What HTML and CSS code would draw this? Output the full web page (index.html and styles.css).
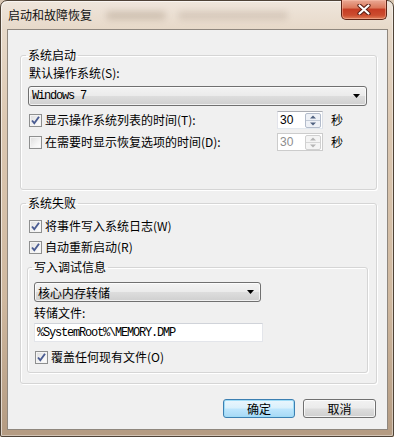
FILE: index.html
```html
<!DOCTYPE html>
<html lang="zh-CN">
<head>
<meta charset="utf-8">
<title>启动和故障恢复</title>
<link rel="stylesheet" href="styles.css">
</head>
<body>
<div class="window">
  <div class="titlebar">
    <span class="title">启动和故障恢复</span>
    <span class="glass"><span class="smudge s1"></span><span class="smudge s2"></span></span>
    <button class="close" aria-label="关闭">
      <svg width="14" height="11" viewBox="0 0 14 11">
        <path d="M2.5 1.5 L11.5 9.5 M11.5 1.5 L2.5 9.5" stroke="#5b1d12" stroke-width="4.2" stroke-linecap="round" fill="none"/>
        <path d="M2.5 1.5 L11.5 9.5 M11.5 1.5 L2.5 9.5" stroke="#ffffff" stroke-width="2.2" stroke-linecap="round" fill="none"/>
      </svg>
    </button>
  </div>
  <div class="client">
    <fieldset class="group g1">
      <legend>系统启动</legend>
      <div class="label">默认操作系统(S):</div>
      <div class="combo combo-wide">
        <span class="mono">Windows 7</span>
        <svg class="arrow" width="7" height="4" viewBox="0 0 7 4"><path d="M0 0 H7 L3.5 4 Z" fill="#000"/></svg>
      </div>
      <div class="timerow">
        <label class="check"><span class="box"><svg width="11" height="11" viewBox="0 0 11 11"><path d="M2 5.5 L4.3 8.2 L9 1.8" stroke="#4a5c92" stroke-width="1.9" fill="none"/></svg></span>显示操作系统列表的时间(T):</label>
        <div class="spin">
          <span class="num">30</span>
          <svg class="spinbtn" width="16" height="15" viewBox="0 0 16 15">
            <rect x="0.5" y="0.5" width="15" height="14" rx="1.5" fill="#eef1f6" stroke="#b3bccb"/>
            <line x1="1" y1="7.5" x2="15" y2="7.5" stroke="#c2cad6"/>
            <path d="M5 5.5 H11 L8 2.5 Z" fill="#4f6180"/>
            <path d="M5 9.5 H11 L8 12.5 Z" fill="#4f6180"/>
          </svg>
        </div>
        <span class="unit">秒</span>
      </div>
      <div class="timerow row2">
        <label class="check"><span class="box"></span>在需要时显示恢复选项的时间(D):</label>
        <div class="spin disabled">
          <span class="num">30</span>
          <svg class="spinbtn" width="16" height="15" viewBox="0 0 16 15">
            <rect x="0.5" y="0.5" width="15" height="14" rx="1.5" fill="#f4f4f4" stroke="#d0d0d0"/>
            <line x1="1" y1="7.5" x2="15" y2="7.5" stroke="#d6d6d6"/>
            <path d="M5 5.5 H11 L8 2.5 Z" fill="#b4b4b4"/>
            <path d="M5 9.5 H11 L8 12.5 Z" fill="#b4b4b4"/>
          </svg>
        </div>
        <span class="unit">秒</span>
      </div>
    </fieldset>

    <fieldset class="group g2">
      <legend>系统失败</legend>
      <label class="check row"><span class="box"><svg width="11" height="11" viewBox="0 0 11 11"><path d="M2 5.5 L4.3 8.2 L9 1.8" stroke="#4a5c92" stroke-width="1.9" fill="none"/></svg></span>将事件写入系统日志(W)</label>
      <label class="check row row-b"><span class="box"><svg width="11" height="11" viewBox="0 0 11 11"><path d="M2 5.5 L4.3 8.2 L9 1.8" stroke="#4a5c92" stroke-width="1.9" fill="none"/></svg></span>自动重新启动(R)</label>

      <fieldset class="group g3">
        <legend>写入调试信息</legend>
        <div class="combo combo-dump">
          <span>核心内存转储</span>
          <svg class="arrow" width="7" height="4" viewBox="0 0 7 4"><path d="M0 0 H7 L3.5 4 Z" fill="#000"/></svg>
        </div>
        <div class="label dumplabel">转储文件:</div>
        <div class="textbox"><span class="mono">%SystemRoot%\MEMORY.DMP</span></div>
        <label class="check row row-c"><span class="box"><svg width="11" height="11" viewBox="0 0 11 11"><path d="M2 5.5 L4.3 8.2 L9 1.8" stroke="#4a5c92" stroke-width="1.9" fill="none"/></svg></span>覆盖任何现有文件(O)</label>
      </fieldset>
    </fieldset>

    <div class="buttons">
      <button class="btn default">确定</button>
      <button class="btn">取消</button>
    </div>
  </div>
</div>
</body>
</html>
```

FILE: styles.css
```css
html, body {
  margin: 0;
  padding: 0;
  background: #d9c7b3;
}
body {
  font-family: "Noto Sans CJK SC", "Noto Sans", sans-serif;
  font-size: 12px;
  color: #000;
}
.window {
  width: 394px;
  height: 437px;
  box-sizing: border-box;
  border: 1px solid #4f4337;
  border-radius: 7px 7px 2px 2px;
  padding: 0 5px 6px 6px;
  background: linear-gradient(180deg, #efe6dc 0px, #e7d9c9 28px, #dcc8b2 120px, #cfb89f 300px, #b59c83 430px);
  display: flex;
  flex-direction: column;
  box-shadow: inset 1px 1px 0 rgba(255,255,255,0.6), inset -1px -1px 0 rgba(255,255,255,0.4);
}
.titlebar {
  height: 28px;
  display: flex;
  align-items: center;
}
.title {
  padding-left: 1px;
  font-size: 12px;
  line-height: 16px;
  color: #111;
  flex: none;
}
.glass {
  flex: 1;
  height: 16px;
  display: flex;
  align-items: center;
  gap: 12px;
  padding-left: 14px;
}
.smudge {
  height: 9px;
  border-radius: 5px;
  background: rgba(120, 95, 75, 0.22);
  filter: blur(3px);
}
.s1 { width: 60px; }
.s2 { width: 110px; background: rgba(120, 95, 75, 0.16); }
.close {
  flex: none;
  align-self: flex-start;
  margin-top: -1px;
  margin-right: 1px;
  width: 46px;
  height: 20px;
  padding: 0;
  border: 1px solid #5e2416;
  border-top: none;
  border-radius: 0 0 5px 5px;
  background: linear-gradient(180deg, #eaa995 0%, #dc7a5d 40%, #c63d24 50%, #cc4c2f 80%, #e0805a 100%);
  box-shadow: inset 0 0 0 1px rgba(255,200,180,0.45);
  display: flex;
  align-items: center;
  justify-content: center;
}
.client {
  height: 401px;
  box-sizing: border-box;
  border: 1px solid #8f877e;
  background: #f0f0f0;
  display: flex;
  flex-direction: column;
}
.group {
  margin: 0;
  border: 1px solid #d5d5d5;
  border-radius: 3px;
  box-shadow: inset 1px 1px 0 #ffffff, 1px 1px 0 #ffffff;
  min-width: 0;
}
.group legend {
  padding: 0 2px;
  line-height: 16px;
  height: 16px;
}
.g1 {
  margin: 17px 10px 0 12px;
  padding: 2px 9px 38px 7px;
}
.g1 > legend { margin-left: -2px; }
.g2 {
  margin: 5px 10px 0 12px;
  padding: 7px 8px 10px 6px;
}
.g2 > legend { margin-left: -1px; }
.g3 {
  margin: 4px 0 0 0;
  padding: 7px 6px 7px 6px;
}
.g3 > legend { margin-left: -2px; }

.label {
  height: 16px;
  line-height: 16px;
  padding-left: 1px;
}
.mono {
  font-family: "Liberation Mono", "DejaVu Sans Mono", monospace;
  font-size: 12px;
  letter-spacing: -1.2px;
}
.combo {
  height: 20px;
  box-sizing: border-box;
  border: 1px solid #707070;
  border-radius: 3px;
  background: linear-gradient(180deg, #f3f3f3 0%, #ebebeb 48%, #dddddd 52%, #cfcfcf 100%);
  box-shadow: inset 0 0 0 1px rgba(255,255,255,0.7);
  display: flex;
  align-items: center;
  justify-content: space-between;
  padding: 0 6px 0 3px;
  margin-top: 5px;
}
.combo-dump {
  width: 227px;
  margin-top: 0;
}
.arrow { flex: none; }

.timerow {
  display: grid;
  grid-template-columns: 249px 46px auto;
  align-items: center;
  height: 18px;
  margin-top: 5px;
}
.timerow.row2 { margin-top: 4px; }
.check {
  display: flex;
  align-items: center;
  height: 16px;
  line-height: 16px;
  padding-left: 1px;
  white-space: nowrap;
}
.box {
  width: 13px;
  height: 13px;
  box-sizing: border-box;
  border: 1px solid #8e8f8f;
  background: linear-gradient(135deg, #dcdcdc 0%, #f4f4f4 60%, #ffffff 100%);
  box-shadow: inset 0 0 0 1px #f4f4f4;
  margin-right: 3px;
  display: flex;
  align-items: center;
  justify-content: center;
  flex: none;
}
.row { padding-left: 2px; }
.row-b { margin-top: 5px; }
.row-c { margin-top: 7px; padding-left: 1px; }

.spin {
  width: 46px;
  height: 18px;
  box-sizing: border-box;
  border: 1px solid #abadb3;
  border-left-color: #e2e3ea;
  border-right-color: #dbdfe6;
  border-bottom-color: #e3e9ef;
  background: #fff;
  display: flex;
  align-items: center;
  justify-content: space-between;
  padding: 0 0 0 2px;
}
.spin .num {
  font-family: "Liberation Sans", Arial, sans-serif;
  font-size: 12px;
  line-height: 16px;
}
.spin .spinbtn { margin-right: 1px; }
.spin.disabled {
  border-color: #cccccc;
  background: #fff;
}
.spin.disabled .num { color: #8d8d8d; }
.unit {
  margin-left: 8px;
  line-height: 16px;
}

.dumplabel { margin-top: 3px; padding-left: 0; }
.textbox {
  width: 229px;
  height: 19px;
  box-sizing: border-box;
  margin-top: 2px;
  border: 1px solid #e3e5ea;
  border-top-color: #d0d3d9;
  background: #fff;
  display: flex;
  align-items: center;
  padding-left: 2px;
}

.buttons {
  display: flex;
  justify-content: flex-end;
  gap: 8px;
  margin-top: 15px;
  padding-right: 11px;
}
.btn {
  width: 73px;
  height: 19px;
  padding: 0;
  box-sizing: border-box;
  font-family: "Noto Sans CJK SC", sans-serif;
  font-size: 12px;
  line-height: 16px;
  color: #000;
  border: 1px solid #707070;
  border-radius: 3px;
  background: linear-gradient(180deg, #f2f2f2 0%, #ebebeb 48%, #dddddd 52%, #cfcfcf 100%);
  box-shadow: inset 0 0 0 1px rgba(255,255,255,0.75);
}
.btn.default {
  width: 72px;
  border-color: #3c7fb1;
  background: linear-gradient(180deg, #eaf6fd 0%, #d9f0fc 48%, #bee6fd 52%, #a7d9f5 100%);
  box-shadow: inset 0 0 0 1px #9fdcf7;
}
```
